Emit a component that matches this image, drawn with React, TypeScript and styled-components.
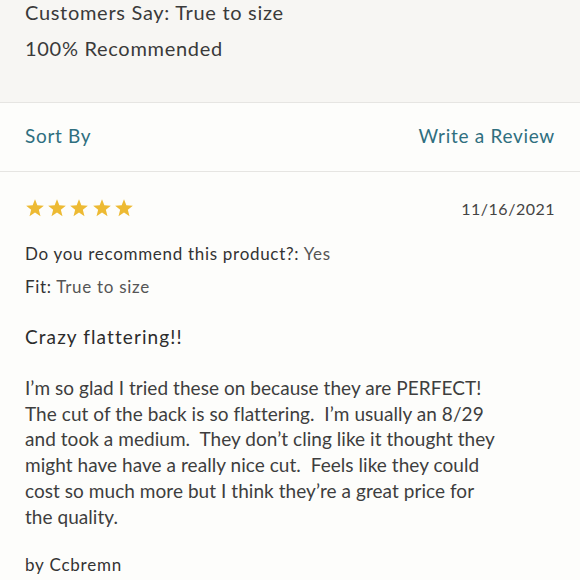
import styled, { createGlobalStyle } from "styled-components";

const GlobalStyle = createGlobalStyle`
  html, body {
    margin: 0;
    padding: 0;
    background: #fdfdfb;
  }
  body {
    font-family: "Lato", "Noto Sans", sans-serif;
    color: #333333;
  }
`;

const Page = styled.div`
  width: 580px;
  height: 580px;
  overflow: hidden;
  background: #fdfdfb;
`;

const Summary = styled.section`
  display: flex;
  flex-direction: column;
  background: #f7f6f3;
  border-bottom: 1px solid #e6e5e2;
  height: 103px;
  box-sizing: border-box;
  padding: 0 25px;
`;

const SummaryLine = styled.div`
  font-size: 20px;
  line-height: 36px;
  letter-spacing: 0.7px;
  color: #3a3a3a;
  &:first-child {
    margin-top: -6px;
  }
`;

const Toolbar = styled.div`
  display: flex;
  justify-content: space-between;
  align-items: center;
  height: 69px;
  box-sizing: border-box;
  padding: 0 25px 4px;
  border-bottom: 1px solid #e6e5e2;
`;

const LinkText = styled.span`
  font-size: 19px;
  letter-spacing: 0.7px;
  color: #2f6f7f;
`;

const Review = styled.article`
  padding: 26px 25px 0;
`;

const ReviewHead = styled.div`
  display: flex;
  justify-content: space-between;
  align-items: center;
  height: 20px;
`;

const Stars = styled.div`
  display: flex;
  gap: 2.2px;
`;

const DateText = styled.span`
  font-size: 16px;
  letter-spacing: 0.5px;
  color: #444;
`;

const Meta = styled.div<{ $top?: number }>`
  font-size: 17px;
  letter-spacing: 0.7px;
  color: #333;
  line-height: 33px;
  margin-top: ${(p) => p.$top ?? 0}px;
`;

const MetaValue = styled.span`
  color: #555;
`;

const Title = styled.h3`
  margin: 21px 0 0;
  font-size: 19px;
  line-height: 26px;
  font-weight: 400;
  letter-spacing: 1.1px;
  color: #2c2c2c;
`;

const Body = styled.p`
  margin: 25px 0 0;
  font-size: 19px;
  line-height: 25.7px;
  letter-spacing: 0.05px;
  color: #3e3e3e;
  white-space: nowrap;
`;

const Author = styled.div`
  margin-top: 24px;
  font-size: 17px;
  line-height: 24px;
  letter-spacing: 0.8px;
  color: #333;
`;

function Star() {
  return (
    <svg width="20" height="20" viewBox="0 0 24 24">
      <path
        d="M12 1.5l2.8 7.3 7.8.4-6 5 2 7.6L12 17.5l-6.6 4.3 2-7.6-6-5 7.8-.4z"
        fill="#edba33"
      />
    </svg>
  );
}

const lines = [
  "I’m so glad I tried these on because they are PERFECT!",
  "The cut of the back is so flattering.\u00a0 I’m usually an 8/29",
  "and took a medium.\u00a0 They don’t cling like it thought they",
  "might have have a really nice cut.\u00a0 Feels like they could",
  "cost so much more but I think they’re a great price for",
  "the quality.",
];

export default function App() {
  return (
    <Page>
      <GlobalStyle />
      <Summary>
        <SummaryLine>Customers Say: True to size</SummaryLine>
        <SummaryLine>100% Recommended</SummaryLine>
      </Summary>
      <Toolbar>
        <LinkText>Sort By</LinkText>
        <LinkText>Write a Review</LinkText>
      </Toolbar>
      <Review>
        <ReviewHead>
          <Stars>
            {[0, 1, 2, 3, 4].map((i) => (
              <Star key={i} />
            ))}
          </Stars>
          <DateText>11/16/2021</DateText>
        </ReviewHead>
        <Meta $top={19}>
          Do you recommend this product?: <MetaValue>Yes</MetaValue>
        </Meta>
        <Meta>
          Fit: <MetaValue>True to size</MetaValue>
        </Meta>
        <Title>Crazy flattering!!</Title>
        <Body>
          {lines.map((l, i) => (
            <span key={i}>
              {l}
              {i < lines.length - 1 && <br />}
            </span>
          ))}
        </Body>
        <Author>by Ccbremn</Author>
      </Review>
    </Page>
  );
}
